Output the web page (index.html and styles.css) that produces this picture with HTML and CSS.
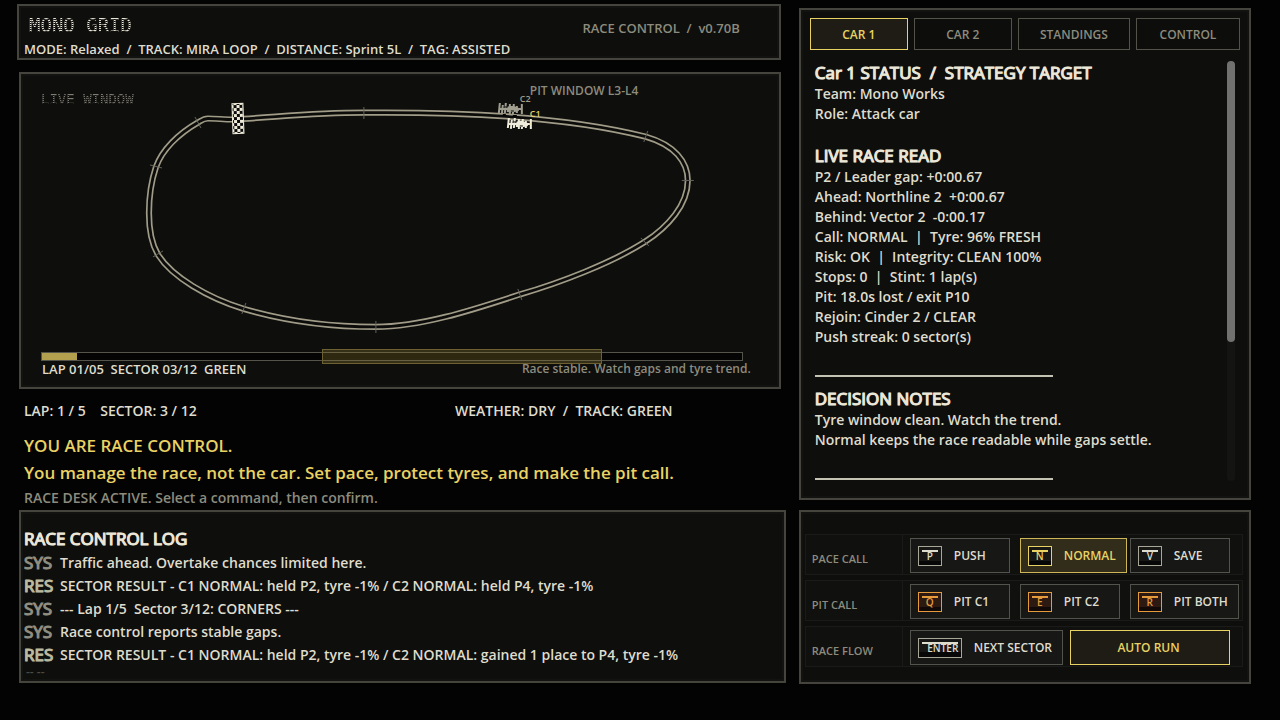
FILE: index.html
```html
<!DOCTYPE html>
<html lang="en">
<head>
  <meta charset="UTF-8">
  <meta name="viewport" content="width=device-width, initial-scale=1">
  <title>Mono Grid - Race Control</title>
  <link rel="stylesheet" href="styles.css">
</head>
<body>
  <main class="desk">

    <div class="left">
      <header class="panel top">
        <div class="top-row">
          <h1 class="dots logo">MONO GRID</h1>
          <span class="version">RACE CONTROL&nbsp; /&nbsp; v0.70B</span>
        </div>
        <p class="mode">MODE: Relaxed&nbsp; /&nbsp; TRACK: MIRA LOOP&nbsp; /&nbsp; DISTANCE: Sprint 5L&nbsp; /&nbsp; TAG: ASSISTED</p>
      </header>

      <section class="panel live">
        <h2 class="dots live-title">LIVE WINDOW</h2>
        <svg class="track" viewBox="21 74 758 272" role="img" aria-label="Track map">
          <defs>
            <path id="loop" d="M198 122.5 C203 119.5 204 118.5 208 118.5 C216 118.5 224 119.5 232 119.5 C275 117.5 310 112.7 364 112.7 C440 112 560 115 646 136.7 C675 145 688 162 688 180.5 C688 205 668 227 645 242 C612 263 560 283 520 294.5 C470 311 420 327 376 327 C330 327 285 321 244 309 C208 298 172 277 158 254.7 C150 241 149 226 149 213 C149 197 151 182 156 167 C162 150 178 134 198 122.5 Z"/>
            <pattern id="check" width="6" height="6" patternUnits="userSpaceOnUse">
              <rect width="6" height="6" fill="#0a0a09"/>
              <rect width="3" height="3" fill="#f0ecdc"/>
              <rect x="3" y="3" width="3" height="3" fill="#f0ecdc"/>
            </pattern>
            <g id="car">
              <path d="M1 0l-1 10M4 2l-1 9M7 0l-1 10M11 1v10M15 1l-1 10M18 3v7M23 1v10" stroke="currentColor" stroke-width="2"/>
              <path d="M1 6h22" stroke="currentColor" stroke-width="2"/>
              <path d="M8 3h7l5 2v3l-4 1h-8z" fill="currentColor"/>
              <path d="M5 4h4M12 8h3M9 2v2" stroke="#0a0a09"/>
            </g>
          </defs>
          <use href="#loop" class="road"/>
          <use href="#loop" class="road-inner"/>
          <path class="ticks" d="M195 117l6 11M364 107v12M648 131l-4 11M682 180.500h12M641 238l8 8M518 289l4 11M376 321v12M246 303l-4 11M153 257l10-6M150 165l12 3"/>
          <g transform="rotate(-2 238 118)">
            <rect x="232" y="103" width="12" height="31" fill="#f0ecdc"/>
            <rect x="233" y="104" width="10" height="29" fill="url(#check)"/>
          </g>
          <text x="530" y="95" class="map-label">PIT WINDOW L3-L4</text>
          <use href="#car" x="499" y="103" color="#a09e8e"/>
          <path d="M503 115h3M513 116h4" stroke="#050505" stroke-width="2"/>
          <use href="#car" x="508" y="118" color="#f0ecdc"/>
          <path d="M530 123v2" stroke="#e8d05a"/>
          <text x="520" y="102" class="car-label">C2</text>
          <text x="530" y="117" class="car-label lead">C1</text>
        </svg>
        <div class="bar" role="img" aria-label="Race distance">
          <div class="bar-done" style="width: 5%"></div>
          <div class="bar-pit" style="left: 40%; width: 40%"></div>
        </div>
        <div class="live-foot">
          <span class="lap">LAP 01/05&nbsp; SECTOR 03/12&nbsp; GREEN</span>
          <span class="dim">Race stable. Watch gaps and tyre trend.</span>
        </div>
      </section>

      <div class="status">
        <span>LAP: 1 / 5&nbsp; &nbsp; SECTOR: 3 / 12</span>
        <span>WEATHER: DRY&nbsp; /&nbsp; TRACK: GREEN</span>
      </div>
      <div class="brief">
        <p>YOU ARE RACE CONTROL.</p>
        <p>You manage the race, not the car. Set pace, protect tyres, and make the pit call.</p>
      </div>
      <p class="prompt">RACE DESK ACTIVE. Select a command, then confirm.</p>

      <section class="panel log">
        <h2>RACE CONTROL LOG</h2>
        <ul>
          <li><b>SYS</b>Traffic ahead. Overtake chances limited here.</li>
          <li><b class="res">RES</b>SECTOR RESULT - C1 NORMAL: held P2, tyre -1% / C2 NORMAL: held P4, tyre -1%</li>
          <li><b>SYS</b>--- Lap 1/5&nbsp; Sector 3/12: CORNERS ---</li>
          <li><b>SYS</b>Race control reports stable gaps.</li>
          <li><b class="res">RES</b>SECTOR RESULT - C1 NORMAL: held P2, tyre -1% / C2 NORMAL: gained 1 place to P4, tyre -1%</li>
          <li class="more">-- --</li>
        </ul>
      </section>
    </div>

    <div class="right">
      <section class="panel info">
        <nav class="tabs">
          <button type="button" class="active">CAR 1</button>
          <button type="button">CAR 2</button>
          <button type="button">STANDINGS</button>
          <button type="button">CONTROL</button>
        </nav>
        <div class="info-body">
          <div class="info-text">
            <h2>Car 1 STATUS&nbsp; /&nbsp; STRATEGY TARGET</h2>
            <p>Team: Mono Works</p>
            <p>Role: Attack car</p>
            <h2 class="next">LIVE RACE READ</h2>
            <p>P2 / Leader gap: +0:00.67</p>
            <p>Ahead: Northline 2&nbsp; +0:00.67</p>
            <p>Behind: Vector 2&nbsp; -0:00.17</p>
            <p>Call: NORMAL&nbsp; |&nbsp; Tyre: 96% FRESH</p>
            <p>Risk: OK&nbsp; |&nbsp; Integrity: CLEAN 100%</p>
            <p>Stops: 0&nbsp; |&nbsp; Stint: 1 lap(s)</p>
            <p>Pit: 18.0s lost / exit P10</p>
            <p>Rejoin: Cinder 2 / CLEAR</p>
            <p>Push streak: 0 sector(s)</p>
            <hr>
            <h2>DECISION NOTES</h2>
            <p>Tyre window clean. Watch the trend.</p>
            <p>Normal keeps the race readable while gaps settle.</p>
            <hr>
          </div>
          <div class="scroll"><div class="scroll-thumb"></div></div>
        </div>
      </section>

      <section class="panel commands">
        <div class="cmd-row">
          <span class="cmd-label">PACE CALL</span>
          <div class="cmd-grid">
            <button type="button"><kbd>P</kbd>PUSH</button>
            <button type="button" class="selected"><kbd>N</kbd>NORMAL</button>
            <button type="button"><kbd>V</kbd>SAVE</button>
          </div>
        </div>
        <div class="cmd-row">
          <span class="cmd-label">PIT CALL</span>
          <div class="cmd-grid pit">
            <button type="button"><kbd>Q</kbd>PIT C1</button>
            <button type="button"><kbd>E</kbd>PIT C2</button>
            <button type="button"><kbd>R</kbd>PIT BOTH</button>
          </div>
        </div>
        <div class="cmd-row">
          <span class="cmd-label">RACE FLOW</span>
          <div class="cmd-flow">
            <button type="button"><kbd class="wide">ENTER</kbd>NEXT SECTOR</button>
            <button type="button" class="auto">AUTO RUN</button>
          </div>
        </div>
      </section>
    </div>

  </main>
</body>
</html>
```

FILE: styles.css
```css
:root {
  --bg: #030303;
  --panel: #0e0e0c;
  --line: #45453d;
  --line-soft: #1a1a18;
  --text: #dedccd;
  --bright: #ebe7d8;
  --dim: #8c8b7d;
  --yellow: #e9d264;
  --orange: #e59a3c;
}

* {
  box-sizing: border-box;
}

body {
  margin: 0;
  background: var(--bg);
  color: var(--text);
  font-family: "Open Sans", "Noto Sans", sans-serif;
  font-size: 14px;
  font-weight: 600;
  line-height: 20px;
}

h1, h2, p, ul {
  margin: 0;
  padding: 0;
}

ul {
  list-style: none;
}

button {
  font: inherit;
  color: inherit;
  padding: 0;
  cursor: pointer;
}

h2 {
  font-size: 17px;
  font-weight: 500;
  line-height: 23px;
  color: var(--bright);
  -webkit-text-stroke: 1px var(--bright);
  text-shadow: 0 0 1px var(--bright);
}

.desk {
  display: grid;
  grid-template-columns: minmax(0, 17fr) minmax(0, 10fr);
  gap: 13px;
  padding: 4px 29px 36px 17px;
}

.left,
.right {
  display: flex;
  flex-direction: column;
}

.panel {
  background: var(--panel);
  border: 2px solid var(--line);
  box-shadow: inset 0 0 0 2px #121210;
}

/* dot matrix lettering */
.dots {
  font-family: "DejaVu Sans Mono", monospace;
  font-weight: 400;
  color: transparent;
  -webkit-text-stroke: 0;
  text-shadow: none;
  background-image:
    repeating-linear-gradient(0deg, transparent 0 1px, #0e0e0c 1px 2px),
    linear-gradient(var(--bright), var(--bright));
  background-clip: text;
  -webkit-background-clip: text;
}

/* header */
.top {
  margin-right: 5px;
  padding: 7px 39px 0 5px;
}

.top-row {
  display: flex;
  justify-content: space-between;
  align-items: flex-end;
}

.logo {
  margin-left: 5px;
  font-size: 19px;
  line-height: 24px;
}

.version {
  color: var(--dim);
  font-size: 13px;
  line-height: 18px;
}

.mode {
  margin-top: 4px;
  font-size: 13px;
  line-height: 17px;
}

/* live window */
.live {
  position: relative;
  margin: 12px 5px 0 2px;
  padding-bottom: 10px;
}

.live-title {
  position: absolute;
  left: 20px;
  top: 14px;
  font-size: 14px;
  opacity: 0.5;
}

.track {
  display: block;
  width: 100%;
}

.road {
  fill: none;
  stroke: #a19c88;
  stroke-width: 6.2;
}

.road-inner {
  fill: none;
  stroke: #0b0b0a;
  stroke-width: 2.8;
}

.ticks {
  fill: none;
  stroke: #66655a;
}

.map-label {
  fill: var(--dim);
  font-size: 12px;
}

.car-label {
  fill: #a09e8e;
  font-size: 9px;
}

.car-label.lead {
  fill: var(--yellow);
}

.bar {
  position: relative;
  height: 9px;
  margin: 6px 36px 0 20px;
  background: #040404;
  border: 1px solid #55544a;
}

.bar-done {
  height: 100%;
  background: #b3a04e;
}

.bar-pit {
  position: absolute;
  top: -4px;
  height: 15px;
  background: rgba(150, 125, 50, 0.3);
  border: 1px solid #6e6131;
}

.live-foot {
  display: flex;
  justify-content: space-between;
  padding: 0 28px 0 21px;
  font-size: 12px;
  line-height: 16px;
}

.lap {
  font-size: 13px;
}

.dim {
  color: var(--dim);
}

/* status lines */
.status {
  display: grid;
  grid-template-columns: 431px 1fr;
  margin: 12px 0 0 7px;
}

.brief {
  margin: 11px 0 0 7px;
  color: var(--yellow);
  font-size: 17px;
  line-height: 27px;
}

.prompt {
  margin: 2px 0 0 7px;
  color: var(--dim);
}

.log {
  height: 173px;
  margin: 2px 0 1px 2px;
  padding: 15px 3px 0;
}

.log li {
  display: flex;
  line-height: 23px;
  white-space: nowrap;
}

.log ul {
  padding-top: 1px;
}

.log b {
  width: 36px;
  color: #8f8e80;
  font-size: 17px;
  font-weight: 500;
  -webkit-text-stroke: 1px;
  text-shadow: 0 0 1px currentColor;
}

.log .res {
  color: #b9b99f;
}

.log .more {
  padding-left: 2px;
  color: #4a4a42;
  font-size: 12px;
  line-height: 12px;
}

/* car panel */
.info {
  margin-top: 4px;
  height: 492px;
  padding: 8px 9px;
}

.tabs {
  display: grid;
  grid-template-columns: 98fr 98fr 112fr 104fr;
  gap: 6px;
}

.tabs button {
  height: 32px;
  padding-top: 1px;
  background: #0d0d0b;
  border: 1px solid #53534a;
  color: var(--dim);
  font-size: 12px;
}

.tabs .active {
  background: #1e1c15;
  border-color: var(--yellow);
  color: var(--yellow);
}

.info-body {
  display: flex;
  justify-content: space-between;
  padding: 11px 5px 0 5px;
}

.info-text .next {
  margin-top: 20px;
}

.info-text hr {
  width: 238px;
  height: 2px;
  margin: 28px 0 10px;
  border: 0;
  background: #c4c2b2;
}

.scroll {
  width: 8px;
  height: 420px;
  border-radius: 4px;
  background: #141413;
}

.scroll-thumb {
  height: 281px;
  border-radius: 4px;
  background: #717170;
}

/* commands */
.commands {
  flex: 1;
  margin-top: 10px;
  padding: 22px 6px 0 4px;
  display: flex;
  flex-direction: column;
  gap: 5px;
}

.cmd-row {
  display: flex;
  height: 41px;
  background: #10100e;
  border: 1px solid var(--line-soft);
}

.cmd-label {
  width: 97px;
  padding: 14px 0 0 6px;
  border-right: 1px solid var(--line-soft);
  color: var(--dim);
  font-size: 11px;
}

.cmd-grid,
.cmd-flow {
  padding: 3px 0 0 7px;
}

.cmd-grid {
  display: grid;
  grid-template-columns: repeat(3, 110px);
}

.cmd-flow {
  display: flex;
  gap: 7px;
}

.commands button {
  display: flex;
  align-items: center;
  justify-self: start;
  min-width: 100px;
  height: 35px;
  padding: 0 10px 0 7px;
  background: #171716;
  border: 1px solid #53534d;
  font-size: 12px;
  white-space: nowrap;
}

.commands .selected {
  background: #322d1b;
  border-color: #cdb657;
  color: var(--yellow);
}

.commands .auto {
  width: 160px;
  justify-content: center;
  background: #1e1c15;
  border-color: var(--yellow);
  color: var(--yellow);
}

kbd {
  position: relative;
  width: 24px;
  height: 20px;
  margin-right: 12px;
  background: linear-gradient(#171716 75%, #070707 75%);
  border: 1px solid #a9a797;
  color: var(--text);
  font: 600 10px/18px "Open Sans", sans-serif;
  text-align: center;
}

kbd::before {
  content: "";
  position: absolute;
  left: 3px;
  right: 3px;
  top: 3px;
  height: 2px;
  background: currentColor;
}

.wide {
  width: 44px;
  padding-left: 6px;
}

.selected kbd {
  border-color: var(--yellow);
  color: var(--yellow);
}

.pit kbd {
  background: linear-gradient(#2c1a12 75%, #100907 75%);
  border-color: var(--orange);
  color: var(--orange);
}
```
